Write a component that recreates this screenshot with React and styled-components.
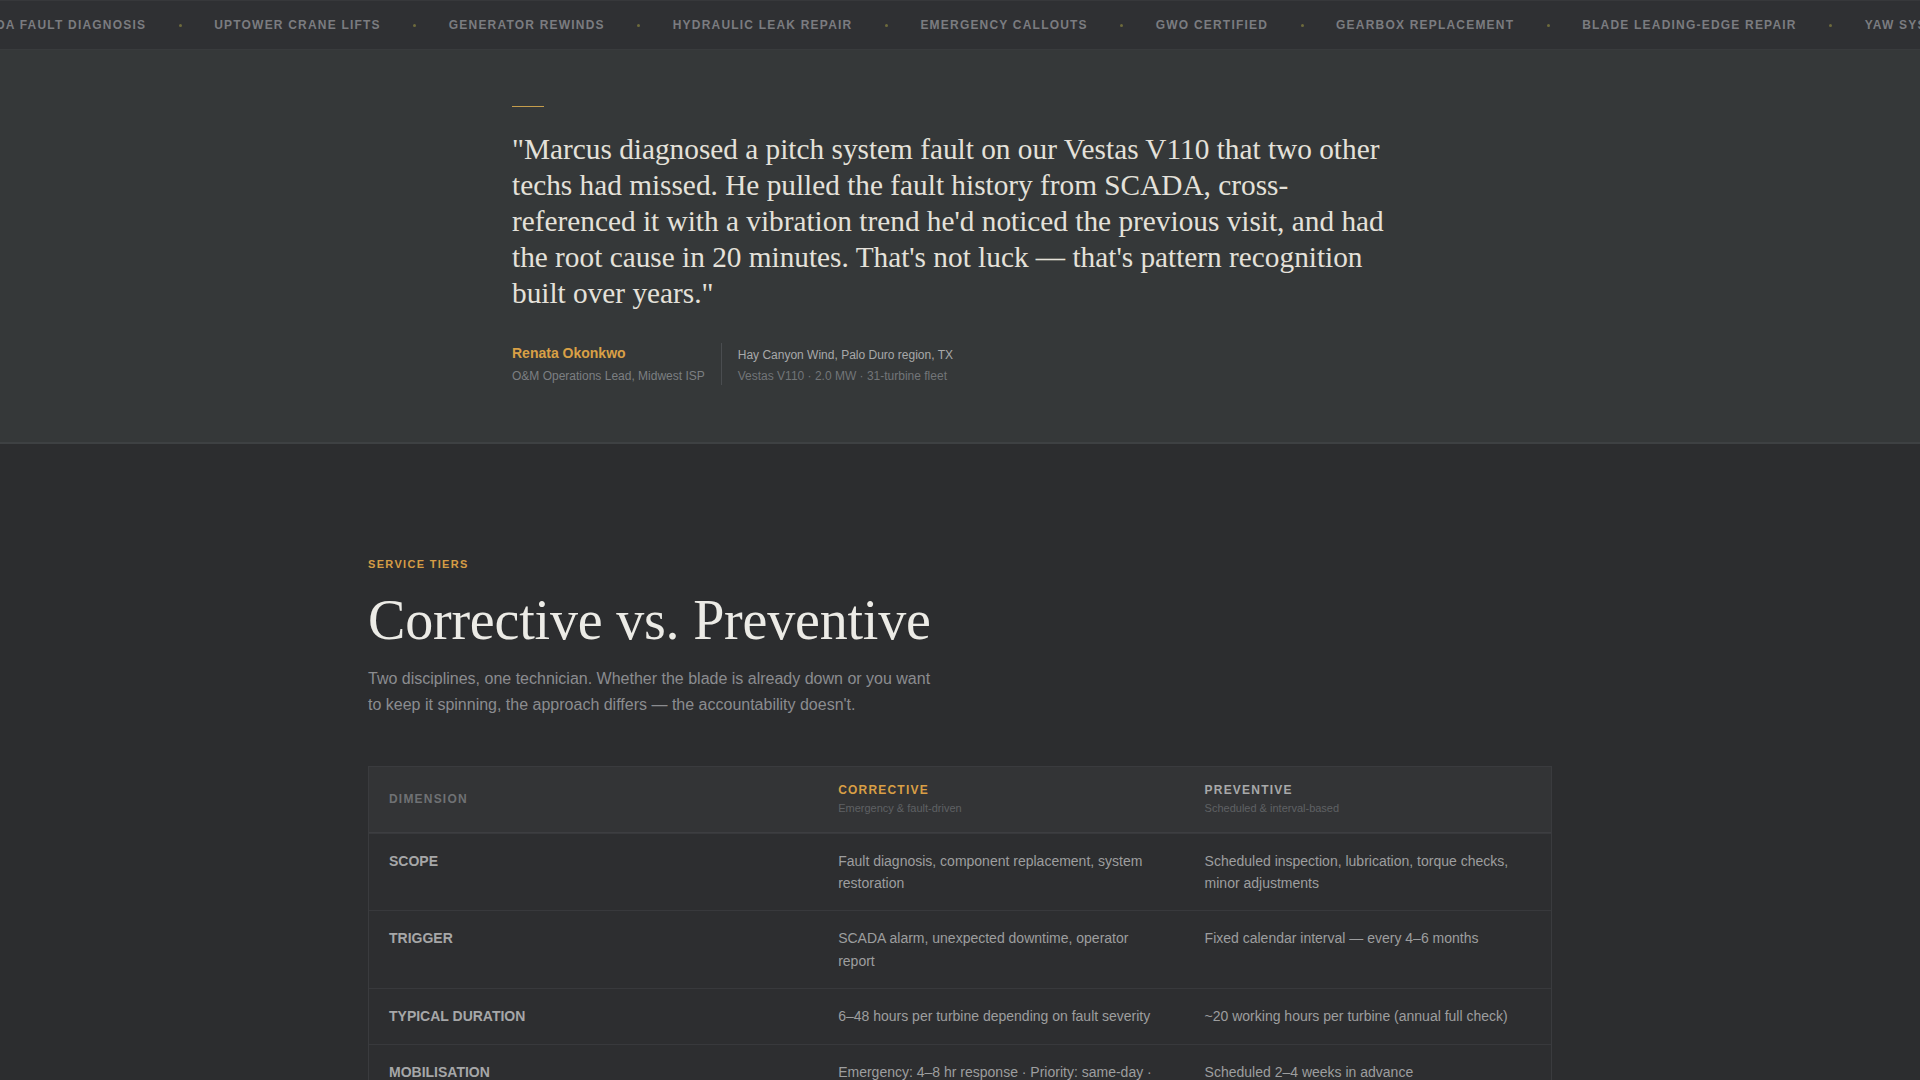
import styled, { createGlobalStyle } from "styled-components";

const services = [
  "SCADA Fault Diagnosis",
  "Uptower Crane Lifts",
  "Generator Rewinds",
  "Hydraulic Leak Repair",
  "Emergency Callouts",
  "GWO Certified",
  "Gearbox Replacement",
  "Blade Leading-Edge Repair",
  "Yaw System Overhaul",
  "Pitch Bearing Service",
];

const rows = [
  {
    label: "Scope",
    corrective: "Fault diagnosis, component replacement, system restoration",
    preventive: "Scheduled inspection, lubrication, torque checks, minor adjustments",
  },
  {
    label: "Trigger",
    corrective: "SCADA alarm, unexpected downtime, operator report",
    preventive: "Fixed calendar interval — every 4–6 months",
  },
  {
    label: "Typical duration",
    corrective: "6–48 hours per turbine depending on fault severity",
    preventive: "~20 working hours per turbine (annual full check)",
  },
  {
    label: "Mobilisation",
    corrective: "Emergency: 4–8 hr response · Priority: same-day · Standard: 48 hr",
    preventive: "Scheduled 2–4 weeks in advance",
  },
  {
    label: "Billing",
    corrective: "Day rate plus parts, call-out fee for emergencies",
    preventive: "Fixed price per turbine, per visit",
  },
];

const GlobalStyle = createGlobalStyle`
  * { box-sizing: border-box; }
  body {
    margin: 0;
    background: #2c2d2f;
    font-family: "Liberation Sans", Arial, sans-serif;
    -webkit-font-smoothing: antialiased;
  }
`;

const Ticker = styled.div`
  height: 50px;
  background: #2f3033;
  border-top: 1px solid #37383b;
  border-bottom: 1px solid #393b3d;
  overflow: hidden;
  display: flex;
  align-items: center;
`;

const Track = styled.div`
  display: flex;
  align-items: center;
  gap: 32.5px;
  white-space: nowrap;
  transform: translateX(-33px); /* marquee frame */
`;

const TickerItem = styled.span`
  font-size: 12px;
  font-weight: 700;
  letter-spacing: 0.1em;
  text-transform: uppercase;
  color: #7b7c80;
`;

const TickerDot = styled.span`
  width: 3px;
  height: 3px;
  border-radius: 50%;
  background: #6d6a3c;
  flex-shrink: 0;
`;

const QuoteSection = styled.section`
  background: #353839;
  border-bottom: 2px solid #3e4143;
  padding: 56px 0 57px;
`;

const QuoteInner = styled.div`
  max-width: 896px;
  margin: 0 auto;
`;

const Rule = styled.div`
  width: 32px;
  height: 1px;
  background: #c59d4c;
  margin-bottom: 24px;
`;

const Quote = styled.blockquote`
  margin: 0;
  max-width: 880px;
  font-family: "Liberation Serif", "Times New Roman", serif;
  font-size: 29.3px;
  line-height: 36px;
  color: #e4e1da;
`;

const Attribution = styled.div`
  margin-top: 32px;
  display: flex;
  align-items: stretch;
`;

const Person = styled.div`
  display: flex;
  flex-direction: column;
  padding-right: 16px;
`;

const Name = styled.span`
  font-size: 14px;
  line-height: 20px;
  font-weight: 700;
  color: #d9a046;
`;

const Role = styled.span`
  margin-top: 4px;
  font-size: 12px;
  line-height: 18px;
  color: #7c7f82;
`;

const Site = styled.div`
  border-left: 1px solid #4a4d50;
  padding: 3px 0 0 16px;
  display: flex;
  flex-direction: column;
`;

const SiteName = styled.span`
  font-size: 12px;
  line-height: 18px;
  color: #a8a9aa;
`;

const SiteMeta = styled.span`
  margin-top: 3px;
  font-size: 12px;
  line-height: 18px;
  color: #727578;
`;

const TiersSection = styled.section`
  padding: 112px 0 80px;
`;

const Container = styled.div`
  max-width: 1184px;
  margin: 0 auto;
`;

const Eyebrow = styled.div`
  font-size: 11px;
  line-height: 16px;
  font-weight: 700;
  letter-spacing: 0.12em;
  text-transform: uppercase;
  color: #d59c45;
`;

const Heading = styled.h2`
  margin: 18px 0 0;
  font-family: "Liberation Serif", "Times New Roman", serif;
  font-weight: 400;
  font-size: 56px;
  line-height: 1.1;
  letter-spacing: -0.2px;
  color: #ecebe6;
`;

const Lead = styled.p`
  margin: 14px 0 0;
  max-width: 572px;
  font-size: 16px;
  line-height: 26px;
  color: #8b8c8f;
`;

const Table = styled.div`
  margin-top: 48px;
  border: 1px solid #3a3b3e;
  background: #2d2e30;
`;

const Row = styled.div`
  display: grid;
  grid-template-columns: 38fr 31fr 31fr;
  border-top: 1px solid #38393c;

  &:first-child {
    border-top: none;
  }
`;

const HeadRow = styled(Row)`
  background: #333436;
  border-bottom: 1px solid #3d3e41;
  align-items: center;
`;

const HeadCell = styled.div`
  padding: 15px 20px 16px;
  display: flex;
  flex-direction: column;
`;

const HeadLabel = styled.span`
  font-size: 12px;
  line-height: 16px;
  font-weight: 700;
  letter-spacing: 0.1em;
  text-transform: uppercase;
  color: ${(p) => p.$tone || "#6f7174"};
`;

const HeadSub = styled.span`
  margin-top: 2px;
  font-size: 11px;
  line-height: 16px;
  color: #5f6164;
`;

const Cell = styled.div`
  padding: 16px 20px;
  font-size: 14px;
  line-height: 22.4px;
  color: #9d9e9f;
`;

const RowLabel = styled(Cell)`
  font-weight: 700;
  text-transform: uppercase;
  color: #a6a7a8;
`;

export default function App() {
  return (
    <>
      <GlobalStyle />
      <Ticker>
        <Track>
          {services.map((s) => (
            <>
              <TickerItem key={s}>{s}</TickerItem>
              <TickerDot key={s + "-dot"} />
            </>
          ))}
        </Track>
      </Ticker>

      <QuoteSection>
        <QuoteInner>
          <Rule />
          <Quote>
            "Marcus diagnosed a pitch system fault on our Vestas V110 that two other techs had
            missed. He pulled the fault history from SCADA, cross-referenced it with a vibration
            trend he'd noticed the previous visit, and had the root cause in 20 minutes. That's
            not luck — that's pattern recognition built over years."
          </Quote>
          <Attribution>
            <Person>
              <Name>Renata Okonkwo</Name>
              <Role>O&amp;M Operations Lead, Midwest ISP</Role>
            </Person>
            <Site>
              <SiteName>Hay Canyon Wind, Palo Duro region, TX</SiteName>
              <SiteMeta>Vestas V110 · 2.0 MW · 31-turbine fleet</SiteMeta>
            </Site>
          </Attribution>
        </QuoteInner>
      </QuoteSection>

      <TiersSection>
        <Container>
          <Eyebrow>Service Tiers</Eyebrow>
          <Heading>Corrective vs. Preventive</Heading>
          <Lead>
            Two disciplines, one technician. Whether the blade is already down or you want to
            keep it spinning, the approach differs — the accountability doesn't.
          </Lead>

          <Table>
            <HeadRow>
              <HeadCell>
                <HeadLabel>Dimension</HeadLabel>
              </HeadCell>
              <HeadCell>
                <HeadLabel $tone="#d99f45">Corrective</HeadLabel>
                <HeadSub>Emergency &amp; fault-driven</HeadSub>
              </HeadCell>
              <HeadCell>
                <HeadLabel $tone="#a8a9aa">Preventive</HeadLabel>
                <HeadSub>Scheduled &amp; interval-based</HeadSub>
              </HeadCell>
            </HeadRow>
            {rows.map((r) => (
              <Row key={r.label}>
                <RowLabel>{r.label}</RowLabel>
                <Cell>{r.corrective}</Cell>
                <Cell>{r.preventive}</Cell>
              </Row>
            ))}
          </Table>
        </Container>
      </TiersSection>
    </>
  );
}
